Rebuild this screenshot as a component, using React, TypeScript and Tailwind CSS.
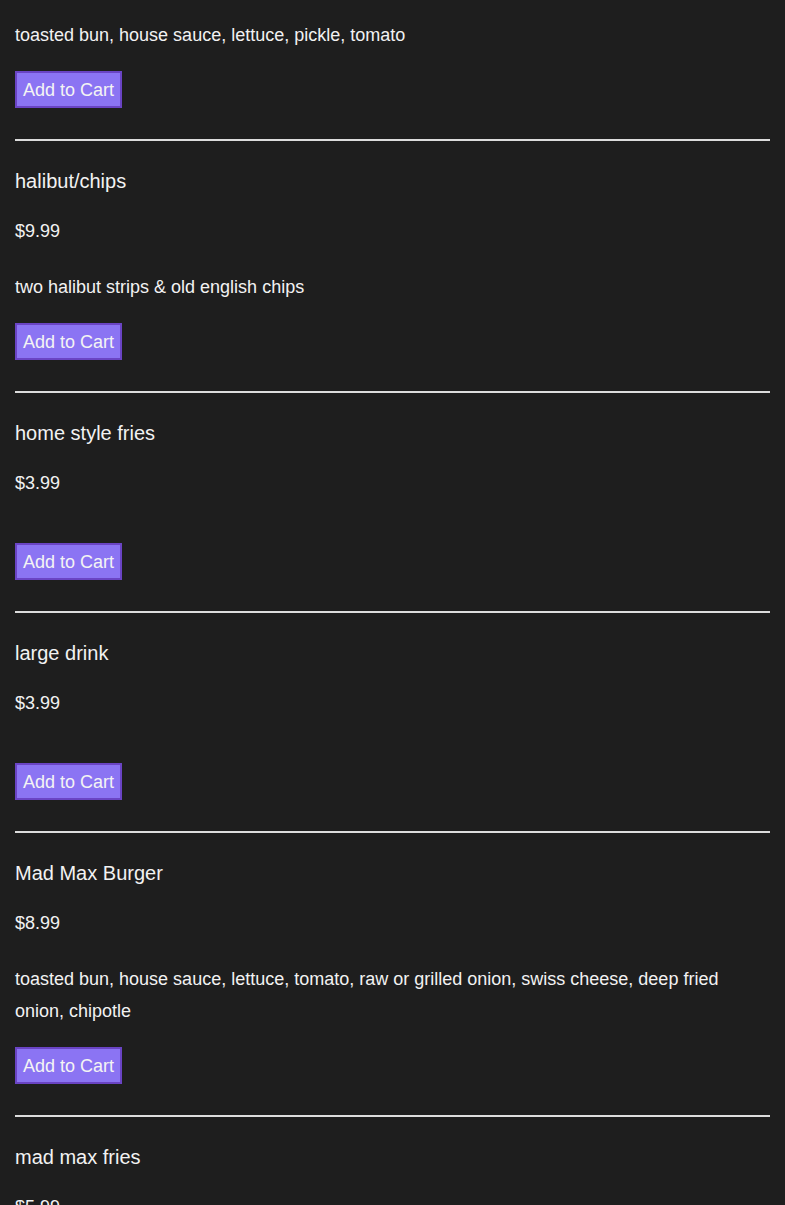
import React from "react";

type Item = { name?: string; price?: string; desc: string };

const items: Item[] = [
  { desc: "toasted bun, house sauce, lettuce, pickle, tomato" },
  { name: "halibut/chips", price: "$9.99", desc: "two halibut strips & old english chips" },
  { name: "home style fries", price: "$3.99", desc: "" },
  { name: "large drink", price: "$3.99", desc: "" },
  {
    name: "Mad Max Burger",
    price: "$8.99",
    desc: "toasted bun, house sauce, lettuce, tomato, raw or grilled onion, swiss cheese, deep fried onion, chipotle",
  },
  { name: "mad max fries", price: "$5.99", desc: "" },
];

function MenuItem({ item, first, last }: { item: Item; first: boolean; last: boolean }) {
  return (
    <div className="flex flex-col">
      {item.name !== undefined && (
        <>
          <div className="mt-[26px] text-[20px] leading-[28px] text-[#f2f2f2]">{item.name}</div>
          <div className="mt-[20px] text-[18px] leading-[32px] text-[#f2f2f2]">{item.price}</div>
        </>
      )}
      <div
        className={
          (first ? "mt-[19px] " : "mt-[24px] ") +
          "mb-[20px] text-[18px] leading-[32px] text-[#f2f2f2]"
        }
      >
        {item.desc}
      </div>
      {!last && (
        <>
          <div>
            <button className="border-2 border-[#6a44c4] bg-[#8b74f3] px-[6px] pt-[7px] pb-[5px] text-[18px] leading-[21px] text-[#f4f4f4]">
              Add to Cart
            </button>
          </div>
          <hr className="mt-[31px] border-0 h-[2px] bg-[#dcdcdc]" />
        </>
      )}
    </div>
  );
}

export default function App() {
  return (
    <div
      className="min-h-screen bg-[#1e1e1e] px-[15px] overflow-hidden h-[1205px]"
      style={{ fontFamily: '"Liberation Sans", Arial, sans-serif' }}
    >
      {items.map((it, i) => (
        <MenuItem key={i} item={it} first={i === 0} last={i === items.length - 1} />
      ))}
    </div>
  );
}
